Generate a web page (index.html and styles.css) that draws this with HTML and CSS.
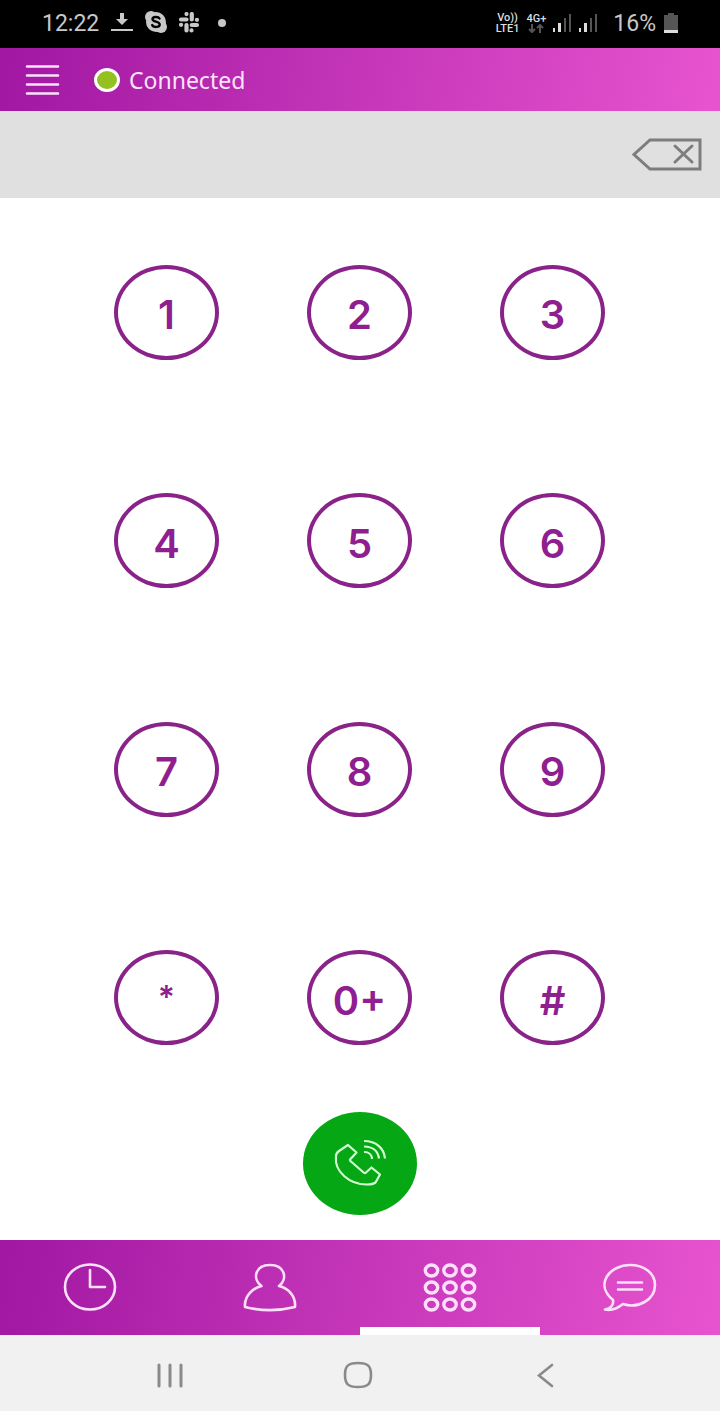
FILE: index.html
```
<!DOCTYPE html>
<html lang="en">

<head>
    <meta charset="UTF-8">
    <meta name="viewport" content="width=device-width, initial-scale=1.0">
    <title>Dialer</title>
    <link rel="stylesheet" href="styles.css">
</head>

<body>
    <div class="status">
        <span class="time">12:22</span>
        <div class="notices">
            <svg width="24" height="22" viewBox="0 0 24 22" fill="#c8c8c8">
                <path d="M10 1h4v6h4l-6 6-6-6h4zM1 17h22v2H1z" />
            </svg>
            <svg width="24" height="24" viewBox="0 0 24 24">
                <circle cx="12" cy="11" r="10" fill="#c8c8c8" />
                <circle cx="7" cy="6" r="6" fill="#c8c8c8" />
                <circle cx="17" cy="16" r="6" fill="#c8c8c8" />
                <path d="M15.500 7.500C14.500 5.700 8.500 5.200 8.500 8.300c0 3 7.200 1.800 7.200 5.200 0 3.300-6.500 3-7.500.5" fill="none" stroke="#000" stroke-width="2.400" stroke-linecap="round" />
            </svg>
            <svg width="22" height="22" viewBox="0 0 22 22" stroke="#c8c8c8" stroke-width="4.200" stroke-linecap="round">
                <path d="M8.500 2v.1M8.500 7.500H3M13.800 2v5.500M19 7.800h-.1M13.800 13H19M13.500 18.500v-.1M8.500 18.500V13M3 12.800h.1" />
            </svg>
            <span class="dot"></span>
        </div>
        <div class="network">
            <span class="volte">Vo))<br>LTE1</span>
            <span class="data">4G+
                <svg width="16" height="9" viewBox="0 0 16 9" fill="none" stroke="#555" stroke-width="2">
                    <path d="M4 0v8M1 5l3 3 3-3M12 9V1M9 4l3-3 3 3" />
                </svg>
            </span>
            <svg width="19" height="20" viewBox="0 0 19 20">
                <path d="M0 15h2v4H0zM5 10h3v9H5z" fill="#ddd" />
                <path d="M11 5h2v14h-2zM16 1h2v18h-2z" fill="#555" />
            </svg>
            <svg width="19" height="20" viewBox="0 0 19 20">
                <path d="M0 15h2v4H0zM5 10h3v9H5z" fill="#ddd" />
                <path d="M11 5h2v14h-2zM16 1h2v18h-2z" fill="#555" />
            </svg>
        </div>
        <span class="percent">16%</span>
        <svg width="14" height="20" viewBox="0 0 14 20">
            <path d="M4 0h6v2h4v15H0V2h4z" fill="#555" />
            <path d="M0 17h14v3H0z" fill="#ddd" />
        </svg>
    </div>

    <header class="topbar">
        <button class="menu" aria-label="Menu">
            <svg width="36" height="32" viewBox="0 0 36 32" stroke="#fbe3fa" stroke-width="2.600" stroke-linecap="round">
                <path d="M3 2.500h31M3 11.500h31M3 20.500h31M3 29.500h31" />
            </svg>
        </button>
        <span class="online"></span>
        <span class="state">Connected</span>
    </header>

    <div class="display">
        <input type="tel" class="number" aria-label="Phone number">
        <button class="erase" aria-label="Delete">
            <svg width="72" height="36" viewBox="0 0 72 36" fill="none" stroke="#7d7d7d" stroke-width="3">
                <path d="M18 3h50v29H18L2 17.500z" />
                <path d="M43 9l17 16M60 9L43 25" stroke-linecap="round" />
            </svg>
        </button>
    </div>

    <main class="dialer">
        <div class="keypad">
            <button class="key">1</button>
            <button class="key">2</button>
            <button class="key">3</button>
            <button class="key">4</button>
            <button class="key">5</button>
            <button class="key">6</button>
            <button class="key">7</button>
            <button class="key">8</button>
            <button class="key">9</button>
            <button class="key star">*</button>
            <button class="key">0+</button>
            <button class="key">#</button>
        </div>
        <button class="call" aria-label="Call">
            <svg width="54" height="50" viewBox="0 0 54 50" fill="none" stroke="#d2ffd2" stroke-width="2.200" stroke-linejoin="round">
                <path d="M6 12l9-6 8.500 7.500L18 19.500c-1.500 1-1.500 2 0 3L30 33c1.500 1.500 2 1.500 3 .5l5.500-5 8.500 7-4.500 8c-2 1.500-5 2-9 2C17 45.500 1 33 3 17c0-2 1-3.500 3-5z" />
                <path d="M31 13c5 0 8 3 8 7M31 7.500c9 0 14 5 15 12M31 2c12 0 20 7 21 17.500" />
            </svg>
        </button>
    </main>

    <nav class="tabs">
        <button class="tab" aria-label="History">
            <svg width="54" height="50" viewBox="0 0 54 50">
                <ellipse cx="27" cy="25" rx="25" ry="22.500" />
                <path d="M27 8v17h15" />
            </svg>
        </button>
        <button class="tab" aria-label="Contacts">
            <svg width="54" height="50" viewBox="0 0 54 50">
                <path d="M18.500 24C9 17 12 3 27 3s18 14 9 21c9 2 17 10 16 21-16 4-34 4-50 0-1-11 8-19 16.500-21z" />
            </svg>
        </button>
        <button class="tab active" aria-label="Keypad">
            <svg width="54" height="50" viewBox="0 0 54 50">
                <g stroke-width="3.400">
                    <ellipse cx="8.500" cy="8.500" rx="6.200" ry="5.500" />
                    <ellipse cx="27" cy="8.500" rx="6.200" ry="5.500" />
                    <ellipse cx="45.500" cy="8.500" rx="6.200" ry="5.500" />
                    <ellipse cx="8.500" cy="25.500" rx="6.200" ry="5.500" />
                    <ellipse cx="27" cy="25.500" rx="6.200" ry="5.500" />
                    <ellipse cx="45.500" cy="25.500" rx="6.200" ry="5.500" />
                    <ellipse cx="8.500" cy="42.500" rx="6.200" ry="5.500" />
                    <ellipse cx="27" cy="42.500" rx="6.200" ry="5.500" />
                    <ellipse cx="45.500" cy="42.500" rx="6.200" ry="5.500" />
                </g>
            </svg>
        </button>
        <button class="tab" aria-label="Messages">
            <svg width="54" height="50" viewBox="0 0 54 50">
                <path d="M10 38C-9 22 7 3 27 3c14 0 25 8 25 20 0 15-17 24-32 19-5 4-11 7-18 5.500 6-1 9-5 8-9.500z" />
                <path d="M15 20.500h24M15 27.500h24" />
            </svg>
        </button>
    </nav>

    <div class="system">
        <button aria-label="Recent apps">
            <svg width="30" height="28" viewBox="0 0 30 28" stroke-width="3">
                <path d="M4 4v21M15 4v21M26 4v21" />
            </svg>
        </button>
        <button aria-label="Home">
            <svg width="30" height="28" viewBox="0 0 30 28" stroke-width="2.600">
                <path d="M15 2c10 0 13 3 13 12s-3 12-13 12S2 23 2 14 5 2 15 2z" />
            </svg>
        </button>
        <button aria-label="Back">
            <svg width="30" height="28" viewBox="0 0 30 28" stroke-width="2.600">
                <path d="M21 4L8 14.500l13 10.500" />
            </svg>
        </button>
    </div>
</body>

</html>
```

FILE: styles.css
```
* {
    box-sizing: border-box;
}

body {
    margin: 0;
    min-height: 100vh;
    display: flex;
    flex-direction: column;
    background: #fff;
    font-family: "Noto Sans", sans-serif;
}

button {
    display: flex;
    align-items: center;
    justify-content: center;
    padding: 0;
    border: none;
    background: none;
    font-family: inherit;
    cursor: pointer;
}

svg {
    display: block;
    flex-shrink: 0;
}

.status {
    height: 48px;
    padding: 0 42px 2px;
    display: flex;
    align-items: center;
    background: #000;
    color: #c8c8c8;
    font-family: Roboto, sans-serif;
    font-size: 23px;
    font-weight: 400;
}

.notices {
    margin-left: 11px;
    display: flex;
    align-items: center;
    gap: 10px;
}

.dot {
    width: 8px;
    height: 8px;
    margin-left: 8px;
    border-radius: 50%;
    background: #c8c8c8;
}

.network {
    margin-left: auto;
    display: flex;
    align-items: center;
    gap: 7px;
}

.volte,
.data {
    font-size: 11px;
    line-height: 11px;
    font-weight: 500;
    text-align: center;
    color: #ddd;
}

.data svg {
    margin: 0 auto;
}

.percent {
    margin: 0 8px 0 15px;
}

.topbar {
    height: 63px;
    padding: 0 24px;
    display: flex;
    align-items: center;
    background: linear-gradient(100deg, #a117a2, #e854cf);
}

.online {
    width: 26px;
    height: 24px;
    margin: 0 9px 0 34px;
    border: 3px solid #fff;
    border-radius: 50%;
    background: #94c11f;
}

.state {
    font-size: 23px;
    color: #fbe3fa;
}

.display {
    height: 87px;
    padding-right: 16px;
    display: flex;
    align-items: center;
    background: #e0e0e0;
}

.number {
    flex: 1;
    min-width: 0;
    height: 100%;
    padding: 0 24px;
    border: none;
    outline: none;
    background: none;
    font-family: inherit;
    font-size: 40px;
    color: #8c1f8e;
}

.dialer {
    flex: 1;
    display: flex;
    flex-direction: column;
    align-items: center;
    padding-bottom: 25px;
}

.keypad {
    flex: 1;
    align-self: stretch;
    padding: 0 71px 0 70px;
    display: grid;
    grid-template-columns: repeat(3, 1fr);
    grid-auto-rows: 1fr;
    place-items: center;
}

.key {
    width: 105px;
    height: 95px;
    padding-top: 6px;
    border: 4px solid #8a2389;
    border-radius: 50%;
    font-family: Inter, sans-serif;
    font-size: 40px;
    font-weight: 600;
    line-height: 48px;
    color: #8f1f90;
}

.star {
    padding-top: 0;
    font-size: 32px;
}

.call {
    width: 114px;
    height: 103px;
    border-radius: 50%;
    background: #05a714;
}

.tabs {
    height: 95px;
    display: grid;
    grid-template-columns: repeat(4, 1fr);
    background: linear-gradient(100deg, #a117a2, #e854cf);
}

.tab {
    position: relative;
    padding-bottom: 2px;
}

.tab svg {
    fill: none;
    stroke: #fde0fb;
    stroke-width: 2.6;
    stroke-linecap: round;
    stroke-linejoin: round;
}

.tab.active::after {
    content: "";
    position: absolute;
    left: 0;
    right: 0;
    bottom: 0;
    height: 8px;
    background: #fff;
}

.system {
    height: 76px;
    padding: 4px 80px 0 76px;
    display: grid;
    grid-template-columns: repeat(3, 1fr);
    background: #f1f1f1;
}

.system svg {
    fill: none;
    stroke: #8a8a8a;
    stroke-linecap: round;
}
```
